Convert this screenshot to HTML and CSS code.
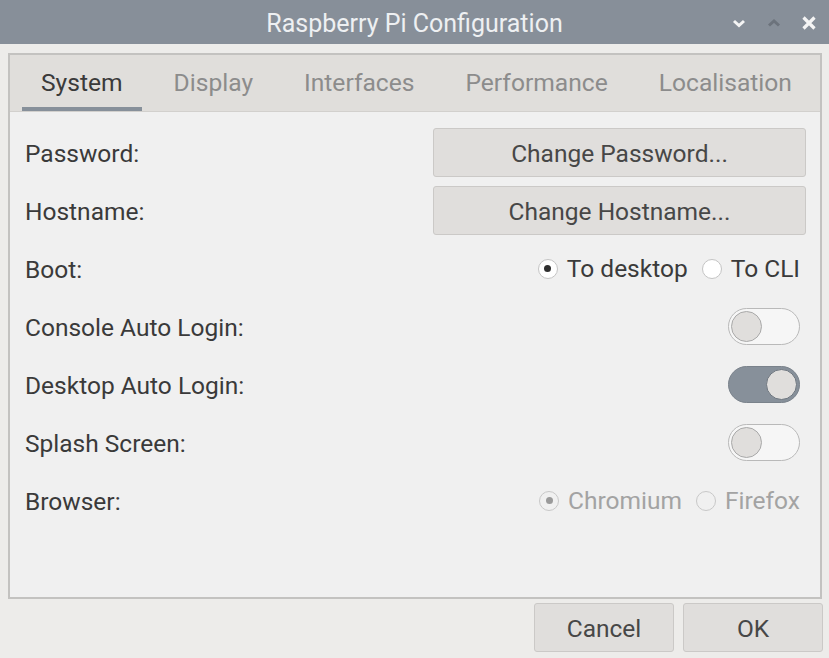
FILE: index.html
```html
<!DOCTYPE html>
<html>
<head>
<meta charset="utf-8">
<link rel="stylesheet" href="styles.css">
</head>
<body>
<div class="window">
  <div class="titlebar">
    <div></div>
    <div class="title">Raspberry Pi Configuration</div>
    <div class="controls">
      <svg class="ctl" width="16" height="12" viewBox="0 0 16 12"><path d="M3 4 L8 8.5 L13 4" fill="none" stroke="#f4f4f4" stroke-width="3"/></svg>
      <svg class="ctl" width="16" height="12" viewBox="0 0 16 12"><path d="M3 8.5 L8 4 L13 8.5" fill="none" stroke="#6c737c" stroke-width="3"/></svg>
      <svg class="ctl" width="16" height="16" viewBox="0 0 16 16"><path d="M2.5 2.5 L13.5 13.5 M13.5 2.5 L2.5 13.5" fill="none" stroke="#f4f4f4" stroke-width="3.2"/></svg>
    </div>
  </div>
  <div class="main">
    <div class="frame">
      <div class="tabs">
        <div class="tab active">System</div>
        <div class="tab">Display</div>
        <div class="tab">Interfaces</div>
        <div class="tab">Performance</div>
        <div class="tab">Localisation</div>
      </div>
      <div class="content">
        <div class="row">
          <span class="label">Password:</span>
          <button class="btn wide">Change Password...</button>
        </div>
        <div class="row">
          <span class="label">Hostname:</span>
          <button class="btn wide">Change Hostname...</button>
        </div>
        <div class="row">
          <span class="label">Boot:</span>
          <div class="radios">
            <span class="radio"><span class="circle checked"></span>To desktop</span>
            <span class="radio"><span class="circle"></span>To CLI</span>
          </div>
        </div>
        <div class="row">
          <span class="label">Console Auto Login:</span>
          <span class="switch"><span class="knob"></span></span>
        </div>
        <div class="row">
          <span class="label">Desktop Auto Login:</span>
          <span class="switch on"><span class="knob"></span></span>
        </div>
        <div class="row">
          <span class="label">Splash Screen:</span>
          <span class="switch"><span class="knob"></span></span>
        </div>
        <div class="row">
          <span class="label">Browser:</span>
          <div class="radios disabled">
            <span class="radio"><span class="circle checked"></span>Chromium</span>
            <span class="radio"><span class="circle"></span>Firefox</span>
          </div>
        </div>
      </div>
    </div>
    <div class="footer">
      <button class="btn action">Cancel</button>
      <button class="btn action">OK</button>
    </div>
  </div>
</div>
</body>
</html>
```

FILE: styles.css
```css
* { box-sizing: border-box; }
html, body { margin: 0; padding: 0; }
body {
  width: 829px;
  height: 658px;
  background: #edecea;
  font-family: Roboto, "Liberation Sans", sans-serif;
  color: #3a3a3a;
  overflow: hidden;
}
.window {
  display: flex;
  flex-direction: column;
  height: 658px;
}
.titlebar {
  height: 44px;
  flex: none;
  background: #878f99;
  display: grid;
  grid-template-columns: 1fr auto 1fr;
  align-items: center;
}
.title {
  color: #eef0f2;
  font-size: 25px;
  font-weight: 400;
  padding-top: 2px;
}
.controls {
  justify-self: end;
  display: flex;
  align-items: center;
  gap: 19px;
  padding-right: 12px;
  padding-top: 2px;
}
.ctl { display: block; }
.main {
  flex: 1;
  display: flex;
  flex-direction: column;
  padding: 9px 7px 6px 8px;
}
.frame {
  flex: 1;
  display: flex;
  flex-direction: column;
  border: 2px solid #c3c2c0;
  background: #f0f0f0;
}
.tabs {
  display: flex;
  height: 57px;
  background: #e0dedb;
  border-bottom: 1px solid #d2d0cd;
  padding-left: 12px;
  gap: 13px;
}
.tab {
  display: flex;
  align-items: center;
  padding: 0 19px;
  font-size: 24.6px;
  color: #8c8c8c;
  border-bottom: 4px solid transparent;
  padding-top: 3px;
}
.tab.active {
  color: #3a3a3a;
  border-bottom-color: #87909a;
}
.content {
  display: flex;
  flex-direction: column;
  gap: 9px;
  padding: 16px 14px 0 15px;
}
.row {
  height: 49px;
  display: flex;
  align-items: center;
  justify-content: space-between;
}
.label {
  font-size: 24.5px;
  color: #3a3a3a;
  padding-top: 2px;
}
.btn {
  font-family: inherit;
  font-size: 24.5px;
  color: #474747;
  background: #e0dedc;
  border: 1px solid #cbc9c7;
  border-radius: 3px;
  padding: 2px 0 0;
}
.btn.wide {
  width: 373px;
  height: 49px;
}
.radios {
  display: flex;
  align-items: center;
  gap: 14px;
  margin-right: 6px;
  font-size: 24.5px;
  color: #3a3a3a;
}
.radio {
  display: flex;
  align-items: center;
  gap: 9px;
}
.circle {
  width: 20px;
  height: 20px;
  border-radius: 50%;
  border: 1px solid #c4c4c4;
  background: #ffffff;
  display: flex;
  align-items: center;
  justify-content: center;
}
.circle.checked::after {
  content: "";
  width: 7px;
  height: 7px;
  border-radius: 50%;
  background: #2f2f2f;
}
.radios.disabled { color: #a3a3a3; }
.radios.disabled .circle {
  background: #f0f0f0;
  border-color: #c8c8c8;
}
.radios.disabled .circle.checked::after { background: #9a9a9a; }
.switch {
  width: 72px;
  height: 37px;
  border-radius: 19px;
  border: 1px solid #b9b9b9;
  background: #f6f6f6;
  margin-right: 6px;
  display: flex;
  align-items: center;
  padding: 0 2px;
}
.knob {
  width: 31px;
  height: 31px;
  border-radius: 50%;
  background: #e0dedc;
  border: 1px solid #a9a9a9;
  box-shadow: 0 0 0 1px #f6f6f6;
}
.switch.on {
  background: #87909a;
  border-color: #7a828b;
  justify-content: flex-end;
}
.switch.on .knob {
  border-color: #6f7780;
  box-shadow: none;
}
.footer {
  display: flex;
  justify-content: flex-end;
  gap: 9px;
  padding-top: 4px;
  margin-right: -1px;
}
.btn.action {
  width: 140px;
  height: 49px;
}
```
